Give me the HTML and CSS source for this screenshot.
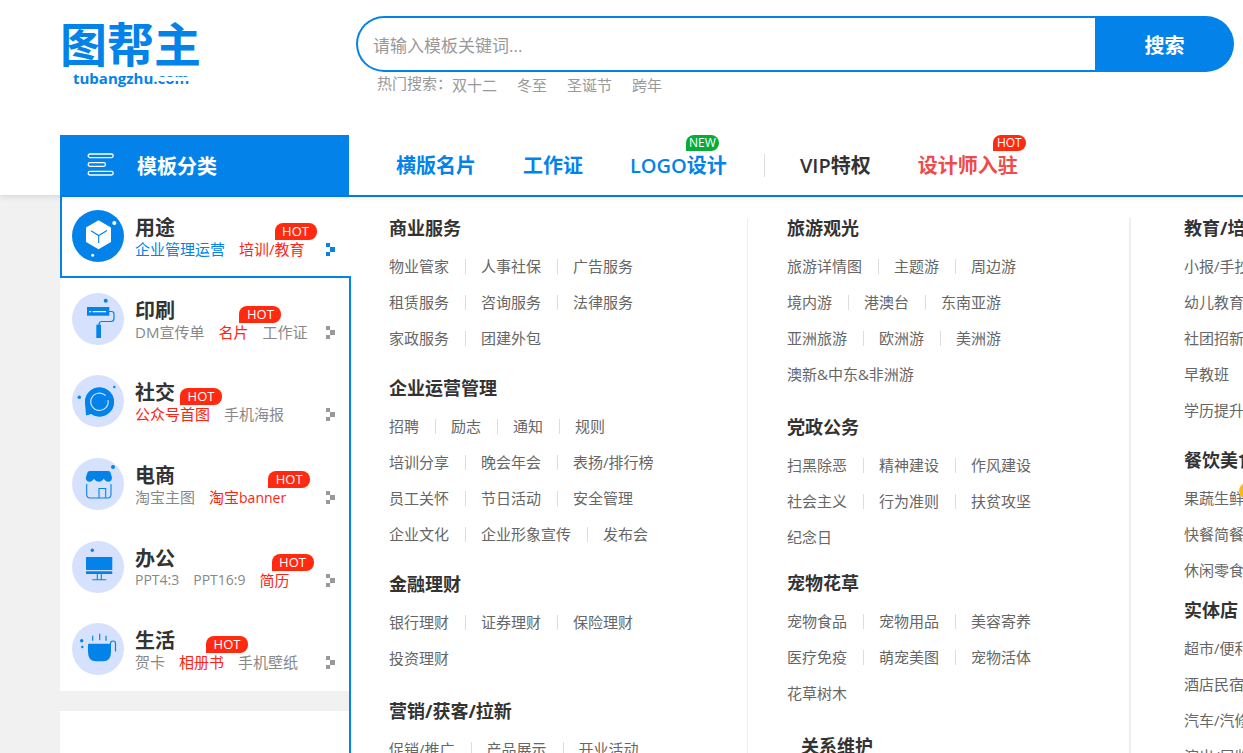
FILE: index.html
```html
<!DOCTYPE html>
<html lang="zh-CN">
<head>
<meta charset="utf-8">
<title>图帮主</title>
<link rel="stylesheet" href="styles.css">
</head>
<body>
<header class="header">
  <div class="top">
    <a class="logo" href="#">
      <span class="logo-name">图帮主</span>
      <span class="logo-domain">tubangzhu.<span class="logo-tld">com</span></span>
    </a>
    <div class="search">
      <form class="search-form">
        <input class="search-input" type="text" placeholder="请输入模板关键词..." aria-label="搜索模板">
        <button class="search-button" type="submit">搜索</button>
      </form>
      <div class="hot-search">
        <span>热门搜索：</span>
        <div class="hot-links">
          <a href="#">双十二</a><a href="#">冬至</a><a href="#">圣诞节</a><a href="#">跨年</a>
        </div>
      </div>
    </div>
  </div>
  <div class="bar">
    <h2 class="category-title">
      <svg width="28" height="24" viewBox="0 0 28 24" fill="none" stroke="#fff" stroke-width="1.3">
        <rect x="1.2" y="1" width="25" height="3.6" rx="1.8"/>
        <rect x="1.2" y="9.7" width="17.3" height="3.6" rx="1.8"/>
        <rect x="1.2" y="18.4" width="25" height="3.6" rx="1.8"/>
      </svg>
      模板分类
    </h2>
    <nav class="nav">
      <a href="#">横版名片</a>
      <a href="#">工作证</a>
      <a href="#">LOGO设计<span class="tag tag-new">NEW</span></a>
      <span class="nav-divider"></span>
      <a class="nav-dark" href="#">VIP特权</a>
      <a class="nav-red" href="#">设计师入驻<span class="tag tag-hot">HOT</span></a>
    </nav>
  </div>
</header>
<main class="main">
  <aside class="sidebar">
    <ul class="menu">
      <li class="item active">
        <svg class="icon" viewBox="0 0 52 52">
          <circle cx="26" cy="26" r="26" fill="#0383ea"/>
          <path d="M26.5 10.2 39 17.5V32l-12.500 7.200L14 32V17.500z" fill="#fff"/>
          <path d="M19 20.700 26.700 25.500 35 20.500M26.700 25.500V33" fill="none" stroke="#0383ea" stroke-width="1.100"/>
          <circle cx="42.300" cy="13" r="2" fill="#fff"/><circle cx="20.700" cy="45.300" r="1.500" fill="#fff"/>
        </svg>
        <div class="item-body">
          <h3>用途</h3>
          <div class="item-links"><a href="#">企业管理运营</a><a class="red" href="#">培训/教育<span class="badge badge-near">HOT</span></a></div>
        </div>
        <svg class="arrow" viewBox="0 0 9 13"><path d="M0 0h4v4h5v5H4v4H0V9h4V4H0z"/></svg>
      </li>
      <li class="item">
        <svg class="icon" viewBox="0 0 52 52">
          <circle cx="26" cy="26" r="26" fill="#d6e2fd"/>
          <g fill="#0383ea">
            <rect x="15" y="14" width="22.300" height="8.700"/>
            <rect x="24.300" y="31.700" width="4.700" height="13.300"/>
            <circle cx="33.700" cy="7.700" r="2"/>
          </g>
          <path d="M17 18.700h2M20.500 18.700H34" stroke="#fff" stroke-width="1.300"/>
          <path d="M37 18.500h2.500q2.500 0 2.500 2.500v4.500q0 3-3 3H30q-3 0-3 3V33" fill="none" stroke="#0383ea" stroke-width="1.200"/>
        </svg>
        <div class="item-body">
          <h3>印刷</h3>
          <div class="item-links"><a href="#">DM宣传单</a><a class="red" href="#">名片<span class="badge badge-far">HOT</span></a><a href="#">工作证</a></div>
        </div>
        <svg class="arrow" viewBox="0 0 9 13"><path d="M0 0h4v4h5v5H4v4H0V9h4V4H0z"/></svg>
      </li>
      <li class="item">
        <svg class="icon" viewBox="0 0 52 52">
          <circle cx="26" cy="26" r="26" fill="#d6e2fd"/>
          <g fill="#0383ea">
            <path d="M13 27a14.500 14.500 0 1 1 6.500 12L14 40.500z"/>
            <circle cx="27.500" cy="27" r="14.500"/>
            <circle cx="7.300" cy="22.300" r="1.700"/><circle cx="42.300" cy="12" r="1.200"/>
          </g>
          <path d="M33.500 20.500a8.700 8.700 0 1 0 2.500 4.500" fill="none" stroke="#d6e2fd" stroke-width="1.200"/>
        </svg>
        <div class="item-body">
          <h3>社交</h3>
          <div class="item-links"><a class="red" href="#">公众号首图<span class="badge badge-near">HOT</span></a><a href="#">手机海报</a></div>
        </div>
        <svg class="arrow" viewBox="0 0 9 13"><path d="M0 0h4v4h5v5H4v4H0V9h4V4H0z"/></svg>
      </li>
      <li class="item">
        <svg class="icon" viewBox="0 0 52 52">
          <circle cx="26" cy="26" r="26" fill="#d6e2fd"/>
          <g fill="#0383ea">
            <path d="M17.500 13h19q1.500 0 2 1.500L40 19.500c0 3-1.800 4.300-3.600 4.300-2.200 0-3.200-1.300-4.600-3-1.400 1.900-2.900 3-4.900 3s-3.500-1.100-4.900-3c-1.400 1.700-2.400 3-4.600 3-1.800 0-3.600-1.300-3.600-4.300l1.700-5q.500-1.500 2-1.500z"/>
            <circle cx="41" cy="9" r="2"/>
          </g>
          <path d="M14.700 26v10.500q0 3.500 3.500 3.500h17.300q3.500 0 3.500-3.500V26M27 40V30.500h6.700V40" fill="none" stroke="#0383ea" stroke-width="1.100"/>
        </svg>
        <div class="item-body">
          <h3>电商</h3>
          <div class="item-links"><a href="#">淘宝主图</a><a class="red" href="#">淘宝<span class="latin">banner</span><span class="badge">HOT</span></a></div>
        </div>
        <svg class="arrow" viewBox="0 0 9 13"><path d="M0 0h4v4h5v5H4v4H0V9h4V4H0z"/></svg>
      </li>
      <li class="item">
        <svg class="icon" viewBox="0 0 52 52">
          <circle cx="26" cy="26" r="26" fill="#d6e2fd"/>
          <g fill="#0383ea">
            <rect x="14" y="16" width="26.300" height="13" rx=".5"/>
            <rect x="14" y="30.300" width="26.300" height="2.700" rx=".5"/>
            <circle cx="20.300" cy="9.300" r="1.700"/>
          </g>
          <path d="M25.300 33v5.500M29.300 33v5.500M20.300 38.700h14" fill="none" stroke="#0383ea" stroke-width="1.100"/>
        </svg>
        <div class="item-body">
          <h3>办公</h3>
          <div class="item-links"><a class="latin" href="#">PPT4:3</a><a class="latin" href="#">PPT16:9</a><a class="red" href="#">简历<span class="badge">HOT</span></a></div>
        </div>
        <svg class="arrow" viewBox="0 0 9 13"><path d="M0 0h4v4h5v5H4v4H0V9h4V4H0z"/></svg>
      </li>
      <li class="item">
        <svg class="icon" viewBox="0 0 52 52">
          <circle cx="26" cy="26" r="26" fill="#d6e2fd"/>
          <g fill="#0383ea">
            <path d="M17 20.700h21q1 0 1 1V29q0 9.300-8 9.300h-7q-8 0-8-9.300v-7.300q0-1 1-1z"/>
            <circle cx="9.700" cy="17.700" r="1.700"/><circle cx="10.300" cy="24" r="1.200"/>
          </g>
          <path d="M38.500 21.500V20.500q0-2.500 2.500-2.500t2.500 2.500V28.500M20.700 12.700v5M27.700 10.700V17.300M34 12.700v5" fill="none" stroke="#0383ea" stroke-width="1.200"/>
        </svg>
        <div class="item-body">
          <h3>生活</h3>
          <div class="item-links"><a href="#">贺卡</a><a class="red" href="#">相册书<span class="badge">HOT</span></a><a href="#">手机壁纸</a></div>
        </div>
        <svg class="arrow" viewBox="0 0 9 13"><path d="M0 0h4v4h5v5H4v4H0V9h4V4H0z"/></svg>
      </li>
    </ul>
    <div class="side-card"></div>
  </aside>
  <section class="mega">
    <div class="col">
      <section class="group">
        <h4>商业服务</h4>
        <div class="row"><a href="#">物业管家</a><a href="#">人事社保</a><a href="#">广告服务</a></div>
        <div class="row"><a href="#">租赁服务</a><a href="#">咨询服务</a><a href="#">法律服务</a></div>
        <div class="row"><a href="#">家政服务</a><a href="#">团建外包</a></div>
      </section>
      <section class="group">
        <h4>企业运营管理</h4>
        <div class="row"><a href="#">招聘</a><a href="#">励志</a><a href="#">通知</a><a href="#">规则</a></div>
        <div class="row"><a href="#">培训分享</a><a href="#">晚会年会</a><a href="#">表扬/排行榜</a></div>
        <div class="row"><a href="#">员工关怀</a><a href="#">节日活动</a><a href="#">安全管理</a></div>
        <div class="row"><a href="#">企业文化</a><a href="#">企业形象宣传</a><a href="#">发布会</a></div>
      </section>
      <section class="group">
        <h4>金融理财</h4>
        <div class="row"><a href="#">银行理财</a><a href="#">证券理财</a><a href="#">保险理财</a></div>
        <div class="row"><a href="#">投资理财</a></div>
      </section>
      <section class="group group-loose">
        <h4>营销/获客/拉新</h4>
        <div class="row"><a href="#">促销/推广</a><a href="#">产品展示</a><a href="#">开业活动</a></div>
      </section>
    </div>
    <div class="col">
      <section class="group">
        <h4>旅游观光</h4>
        <div class="row"><a href="#">旅游详情图</a><a href="#">主题游</a><a href="#">周边游</a></div>
        <div class="row"><a href="#">境内游</a><a href="#">港澳台</a><a href="#">东南亚游</a></div>
        <div class="row"><a href="#">亚洲旅游</a><a href="#">欧洲游</a><a href="#">美洲游</a></div>
        <div class="row"><a href="#">澳新&amp;中东&amp;非洲游</a></div>
      </section>
      <section class="group group-loose">
        <h4>党政公务</h4>
        <div class="row"><a href="#">扫黑除恶</a><a href="#">精神建设</a><a href="#">作风建设</a></div>
        <div class="row"><a href="#">社会主义</a><a href="#">行为准则</a><a href="#">扶贫攻坚</a></div>
        <div class="row"><a href="#">纪念日</a></div>
      </section>
      <section class="group group-snug">
        <h4>宠物花草</h4>
        <div class="row"><a href="#">宠物食品</a><a href="#">宠物用品</a><a href="#">美容寄养</a></div>
        <div class="row"><a href="#">医疗免疫</a><a href="#">萌宠美图</a><a href="#">宠物活体</a></div>
        <div class="row"><a href="#">花草树木</a></div>
      </section>
      <section class="group group-loose group-indent">
        <h4>关系维护</h4>
      </section>
    </div>
    <div class="col">
      <section class="group">
        <h4>教育/培训</h4>
        <div class="row"><a href="#">小报/手抄报</a></div>
        <div class="row"><a href="#">幼儿教育</a></div>
        <div class="row"><a href="#">社团招新</a></div>
        <div class="row"><a href="#">早教班</a></div>
        <div class="row"><a href="#">学历提升</a></div>
      </section>
      <section class="group">
        <h4>餐饮美食</h4>
        <div class="row"><a href="#">果蔬生鲜<span class="dot"></span></a></div>
        <div class="row"><a href="#">快餐简餐</a></div>
        <div class="row"><a href="#">休闲零食</a></div>
      </section>
      <section class="group group-tight">
        <h4>实体店</h4>
        <div class="row"><a href="#">超市/便利店</a></div>
        <div class="row"><a href="#">酒店民宿</a></div>
        <div class="row"><a href="#">汽车/汽修</a></div>
        <div class="row"><a href="#">演出/展览</a></div>
      </section>
    </div>
  </section>
</main>
</body>
</html>
```
FILE: styles.css
```css
* { box-sizing: border-box; }
body {
  margin: 0;
  height: 100vh;
  display: flex;
  flex-direction: column;
  overflow: hidden;
  background: #f1f1f1;
  color: #333;
  font-family: "Open Sans", "Noto Sans CJK SC", sans-serif;
  font-size: 15px;
  white-space: nowrap;
}
a { color: inherit; text-decoration: none; }
h2, h3, h4, ul { margin: 0; padding: 0; list-style: none; }

.header {
  position: relative;
  z-index: 2;
  flex: none;
  background: #fff;
  box-shadow: 0 2px 6px rgba(0, 0, 0, .1);
}
.top {
  display: flex;
  height: 135px;
  padding: 16px 9px 0 60px;
}
.logo {
  flex: none;
  width: 296px;
  display: flex;
  flex-direction: column;
  color: #0383ea;
  font-weight: 700;
}
.logo-name { font-size: 47px; line-height: 56px; }
.logo-domain { padding-left: 13px; font-size: 15px; line-height: 12px; }
.logo-tld { position: relative; }
.logo-tld::after {
  content: "";
  position: absolute;
  left: 0;
  right: 0;
  top: 9px;
  height: 4px;
  background: #fff;
}
.search { flex: 1; min-width: 0; }
.search-form {
  display: flex;
  height: 56px;
  padding: 2px 0 2px 2px;
  border-radius: 28px;
  background: #0383ea;
}
.search-input {
  flex: 1;
  min-width: 0;
  border: 0;
  border-radius: 26px 0 0 26px;
  outline: 0;
  padding: 2px 15px 0;
  background: #fff;
  font: 17px "Open Sans", "Noto Sans CJK SC", sans-serif;
}
.search-input::placeholder { color: #999; }
.search-button {
  width: 139px;
  border: 0;
  background: transparent;
  color: #fff;
  font: bold 20px "Open Sans", "Noto Sans CJK SC", sans-serif;
}
.hot-search {
  display: flex;
  padding-left: 21px;
  line-height: 22px;
  color: #999;
}
.hot-links { display: flex; gap: 20px; padding-top: 2px; }

.bar { display: flex; height: 60px; padding-left: 60px; }
.category-title {
  flex: none;
  width: 289px;
  display: flex;
  align-items: center;
  gap: 22px;
  padding-left: 27px;
  background: #0383ea;
  color: #fff;
  font-size: 20px;
}
.nav {
  display: flex;
  align-items: flex-start;
  padding-left: 47px;
  gap: 47px;
  color: #0383ea;
  font-size: 20px;
  font-weight: 600;
  line-height: 62px;
}
.nav a { position: relative; }
.nav-divider { align-self: center; width: 1px; height: 23px; margin: 0 -12px 0 -10px; background: #ddd; }
.nav .nav-dark { color: #333; }
.nav .nav-red { color: #f04a4a; }
.tag {
  position: absolute;
  top: 0;
  height: 16px;
  padding: 0 3px;
  border-radius: 8px 8px 8px 0;
  color: #fff;
  font-size: 12px;
  font-weight: 400;
  line-height: 16px;
}
.tag-new { right: 8px; background: #08ab3a; }
.tag-hot { right: -8px; padding: 0 4px; background: #ff2a10; }

.main { flex: 1; min-height: 0; display: flex; padding-left: 60px; overflow: hidden; }
.sidebar { flex: none; width: 289px; display: flex; flex-direction: column; gap: 20px; }
.menu {
  flex: none;
  display: grid;
  grid-auto-rows: 1fr;
  min-height: 496px;
  background: #fff;
}
.item {
  display: flex;
  gap: 11px;
  padding: 15px 14px 0 12px;
  color: #888;
}
.active {
  position: relative;
  z-index: 1;
  margin-right: -2px;
  padding: 13px 16px 0 10px;
  border: 2px solid #0383ea;
  border-right: 0;
  background: #fff;
  color: #0383ea;
}
.icon { flex: none; width: 52px; height: 52px; }
.item-body { flex: 1; padding-top: 6px; }
.item h3 { color: #333; font-size: 20px; line-height: 24px; }
.item-links { display: flex; gap: 14px; line-height: 18px; }
.item-links a { position: relative; }
.latin { font-size: 14px; }
.red { color: #ff2412; }
.badge {
  position: absolute;
  top: -17px;
  right: -24px;
  width: 42px;
  height: 17px;
  border-radius: 8px 8px 8px 0;
  background: #ff2a10;
  color: #fff;
  font-size: 13px;
  line-height: 17px;
  text-align: center;
}
.badge-near { right: -12px; }
.badge-far { right: -33px; }
.arrow { flex: none; width: 9px; height: 13px; margin-top: 33px; fill: #999; }
.active .arrow { fill: #0383ea; }
.side-card { flex: 1; background: #fff; }

.mega {
  flex: 1;
  min-width: 0;
  display: grid;
  grid-template-columns: 397px 383px 1fr;
  padding-top: 21px;
  border-top: 2px solid #0383ea;
  border-left: 2px solid #0383ea;
  background: #fff;
  overflow: hidden;
}
.col { padding-left: 38px; border-right: 1px solid #eee; }
.col + .col { padding-left: 39px; border-right-width: 2px; }
.col + .col:last-child { padding-left: 53px; border-right: 0; }
.group + .group { margin-top: 22px; }
.group + .group-loose { margin-top: 25px; }
.group + .group-snug { margin-top: 18px; }
.group + .group-tight { margin-top: 12px; }
.group-indent { padding-left: 14px; }
.group h4 { margin-bottom: 10px; font-size: 18px; line-height: 20px; }
.row { display: flex; align-items: center; height: 36px; color: #666; }
.row a { position: relative; line-height: 15px; }
.row a:not(:last-child) {
  margin-right: 15px;
  padding-right: 16px;
  border-right: 1px solid #ddd;
}
.dot {
  position: absolute;
  left: 55px;
  top: -8px;
  width: 16px;
  height: 16px;
  border-radius: 8px;
  background: #fdb913;
}
```
